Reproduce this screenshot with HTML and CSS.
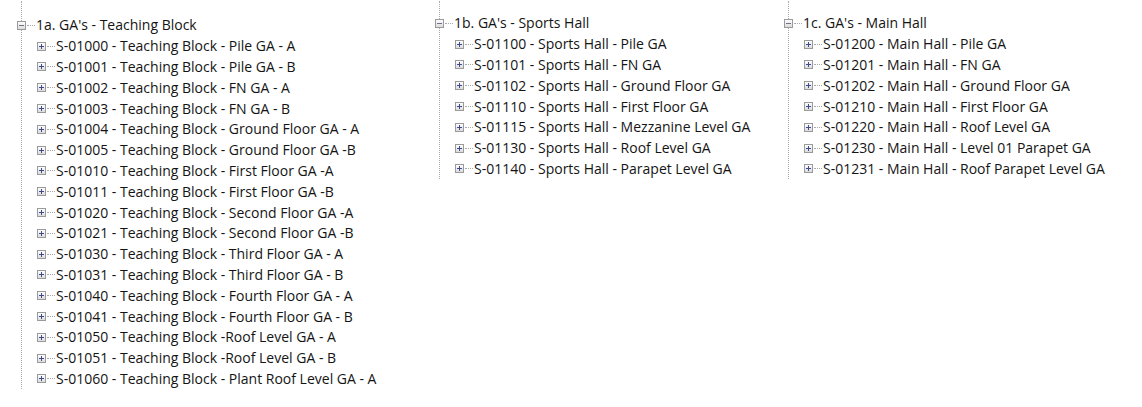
FILE: index.html
```html
<!DOCTYPE html>
<html lang="en">
  <head>
    <meta charset="UTF-8" />
    <title>Project Browser - Sheets</title>
    <link rel="stylesheet" href="styles.css">
  </head>
  <body>
    <div class="browser">
      <div class="tree tree-first">
        <div class="row"><span class="toggle open"></span><span class="dots"></span><span class="label">1a. GA's - Teaching Block</span></div>
        <div class="children">
          <div class="row"><span class="toggle"></span><span class="dots"></span><span class="label">S-01000 - Teaching Block - Pile GA - A</span></div>
          <div class="row"><span class="toggle"></span><span class="dots"></span><span class="label">S-01001 - Teaching Block - Pile GA - B</span></div>
          <div class="row"><span class="toggle"></span><span class="dots"></span><span class="label">S-01002 - Teaching Block - FN GA - A</span></div>
          <div class="row"><span class="toggle"></span><span class="dots"></span><span class="label">S-01003 - Teaching Block - FN GA - B</span></div>
          <div class="row"><span class="toggle"></span><span class="dots"></span><span class="label">S-01004 - Teaching Block - Ground Floor GA - A</span></div>
          <div class="row"><span class="toggle"></span><span class="dots"></span><span class="label">S-01005 - Teaching Block - Ground Floor GA -B</span></div>
          <div class="row"><span class="toggle"></span><span class="dots"></span><span class="label">S-01010 - Teaching Block - First Floor GA -A</span></div>
          <div class="row"><span class="toggle"></span><span class="dots"></span><span class="label">S-01011 - Teaching Block - First Floor GA -B</span></div>
          <div class="row"><span class="toggle"></span><span class="dots"></span><span class="label">S-01020 - Teaching Block - Second Floor GA -A</span></div>
          <div class="row"><span class="toggle"></span><span class="dots"></span><span class="label">S-01021 - Teaching Block - Second Floor GA -B</span></div>
          <div class="row"><span class="toggle"></span><span class="dots"></span><span class="label">S-01030 - Teaching Block - Third Floor GA - A</span></div>
          <div class="row"><span class="toggle"></span><span class="dots"></span><span class="label">S-01031 - Teaching Block - Third Floor GA - B</span></div>
          <div class="row"><span class="toggle"></span><span class="dots"></span><span class="label">S-01040 - Teaching Block - Fourth Floor GA - A</span></div>
          <div class="row"><span class="toggle"></span><span class="dots"></span><span class="label">S-01041 - Teaching Block - Fourth Floor GA - B</span></div>
          <div class="row"><span class="toggle"></span><span class="dots"></span><span class="label">S-01050 - Teaching Block -Roof Level GA - A</span></div>
          <div class="row"><span class="toggle"></span><span class="dots"></span><span class="label">S-01051 - Teaching Block -Roof Level GA - B</span></div>
          <div class="row"><span class="toggle"></span><span class="dots"></span><span class="label">S-01060 - Teaching Block - Plant Roof Level GA - A</span></div>
        </div>
      </div>

      <div class="tree">
        <div class="row"><span class="toggle open"></span><span class="dots"></span><span class="label">1b. GA's - Sports Hall</span></div>
        <div class="children">
          <div class="row"><span class="toggle"></span><span class="dots"></span><span class="label">S-01100 - Sports Hall - Pile GA</span></div>
          <div class="row"><span class="toggle"></span><span class="dots"></span><span class="label">S-01101 - Sports Hall - FN GA</span></div>
          <div class="row"><span class="toggle"></span><span class="dots"></span><span class="label">S-01102 - Sports Hall - Ground Floor GA</span></div>
          <div class="row"><span class="toggle"></span><span class="dots"></span><span class="label">S-01110 - Sports Hall - First Floor GA</span></div>
          <div class="row"><span class="toggle"></span><span class="dots"></span><span class="label">S-01115 - Sports Hall - Mezzanine Level GA</span></div>
          <div class="row"><span class="toggle"></span><span class="dots"></span><span class="label">S-01130 - Sports Hall - Roof Level GA</span></div>
          <div class="row"><span class="toggle"></span><span class="dots"></span><span class="label">S-01140 - Sports Hall - Parapet Level GA</span></div>
        </div>
      </div>

      <div class="tree">
        <div class="row"><span class="toggle open"></span><span class="dots"></span><span class="label">1c. GA's - Main Hall</span></div>
        <div class="children">
          <div class="row"><span class="toggle"></span><span class="dots"></span><span class="label">S-01200 - Main Hall - Pile GA</span></div>
          <div class="row"><span class="toggle"></span><span class="dots"></span><span class="label">S-01201 - Main Hall - FN GA</span></div>
          <div class="row"><span class="toggle"></span><span class="dots"></span><span class="label">S-01202 - Main Hall - Ground Floor GA</span></div>
          <div class="row"><span class="toggle"></span><span class="dots"></span><span class="label">S-01210 - Main Hall - First Floor GA</span></div>
          <div class="row"><span class="toggle"></span><span class="dots"></span><span class="label">S-01220 - Main Hall - Roof Level GA</span></div>
          <div class="row"><span class="toggle"></span><span class="dots"></span><span class="label">S-01230 - Main Hall - Level 01 Parapet GA</span></div>
          <div class="row"><span class="toggle"></span><span class="dots"></span><span class="label">S-01231 - Main Hall - Roof Parapet Level GA</span></div>
        </div>
      </div>
    </div>
  </body>
</html>
```

FILE: styles.css
```css
body {
  margin: 0;
  background: #fff;
  font-family: "Open Sans", "Noto Sans", sans-serif;
  font-size: 14px;
  color: #141414;
}

.browser {
  display: grid;
  grid-template-columns: 418px 349px auto;
  padding: 0 0 0 17px;
}

.tree {
  position: relative;
  align-self: start;
  padding: 13px 0 0;
}

.tree-first {
  padding-top: 15px;
}

/* dotted guide running down the tree */
.tree::before {
  content: "";
  position: absolute;
  left: 4px;
  top: 1px;
  bottom: 0;
  border-left: 1px dotted #a9a9a9;
}

.children {
  padding-left: 20px;
}

.row {
  display: flex;
  align-items: center;
  height: 20.8px;
  white-space: nowrap;
}

.toggle {
  position: relative;
  box-sizing: border-box;
  flex: none;
  width: 9px;
  height: 9px;
  border: 1px solid #9a9a9a;
  background: linear-gradient(#fdfdfd, #dcdcdc);
}

.toggle::before,
.toggle::after {
  content: "";
  position: absolute;
  background: #3c4c8c;
}

.toggle::before {
  left: 1px;
  top: 3px;
  width: 5px;
  height: 1px;
}

.toggle::after {
  left: 3px;
  top: 1px;
  width: 1px;
  height: 5px;
}

.toggle.open::before {
  background: #6d7486;
}

.toggle.open::after {
  display: none;
}

.dots {
  flex: none;
  width: 8px;
  margin: 0 1px;
  border-top: 1px dotted #a9a9a9;
}

.label {
  padding-bottom: 1px;
}
```
